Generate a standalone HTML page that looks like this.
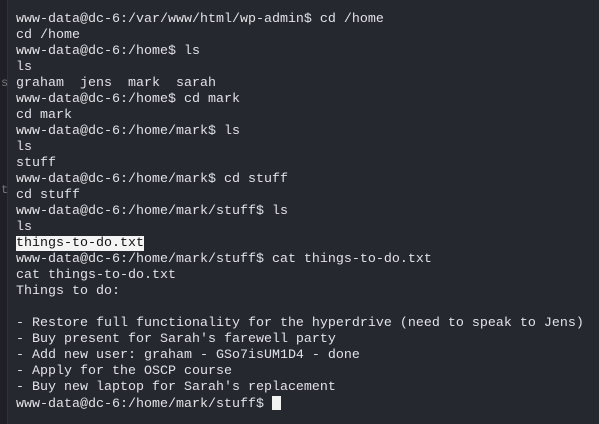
<!DOCTYPE html>
<html><head><style>
html,body{margin:0;padding:0;width:599px;height:424px;background:#262830;overflow:hidden}
.side{position:absolute;left:0;top:0;width:7px;height:424px;background:#1f2027;border-right:1px solid #30323b}
pre{position:absolute;left:16px;top:12px;margin:0;font-family:"Liberation Mono",monospace;font-size:13.33px;line-height:16px;color:#e2e2e6}
.hl{background:#f4f4f4;color:#111}
.cur{display:inline-block;width:9px;height:14px;background:#f2f2f2;vertical-align:-3px}
.g{position:absolute;left:1px;font-family:"Liberation Mono",monospace;font-size:12px;color:#777}
</style></head><body>
<div class="side"></div>
<div class="g" style="top:76px">s</div>
<div class="g" style="top:183px">t</div>
<pre>www-data@dc-6:/var/www/html/wp-admin$ cd /home
cd /home
www-data@dc-6:/home$ ls
ls
graham  jens  mark  sarah
www-data@dc-6:/home$ cd mark
cd mark
www-data@dc-6:/home/mark$ ls
ls
stuff
www-data@dc-6:/home/mark$ cd stuff
cd stuff
www-data@dc-6:/home/mark/stuff$ ls
ls
<span class="hl">things-to-do.txt</span>
www-data@dc-6:/home/mark/stuff$ cat things-to-do.txt
cat things-to-do.txt
Things to do:

- Restore full functionality for the hyperdrive (need to speak to Jens)
- Buy present for Sarah's farewell party
- Add new user: graham - GSo7isUM1D4 - done
- Apply for the OSCP course
- Buy new laptop for Sarah's replacement
www-data@dc-6:/home/mark/stuff$ <span class="cur"></span></pre>
</body></html>
